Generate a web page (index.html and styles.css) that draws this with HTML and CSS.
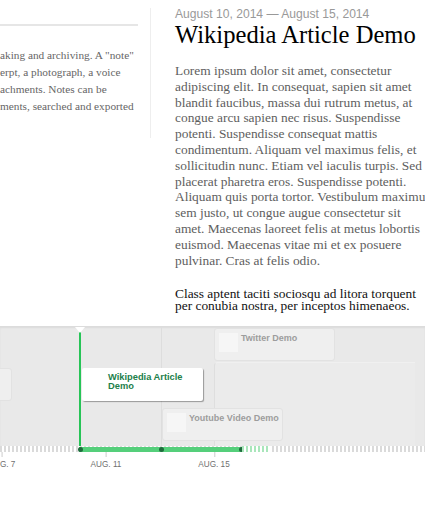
FILE: index.html
```html
<!DOCTYPE html>
<html lang="en">
<head>
<meta charset="utf-8">
<title>Timeline</title>
<link rel="stylesheet" href="styles.css">
</head>
<body>
<div class="timeline">
  <div class="slider">
    <article class="slide slide-prev">
      <div class="prev-rule"></div>
      <p class="prev-text">aking and archiving. A "note"<br>erpt, a photograph, a voice<br>achments. Notes can be<br>ments, searched and exported</p>
    </article>
    <div class="divider"></div>
    <article class="slide slide-current">
      <div class="date">August 10, 2014 — August 15, 2014</div>
      <h1 class="title">Wikipedia Article Demo</h1>
      <p class="body">Lorem ipsum dolor sit amet, consectetur<br>adipiscing elit. In consequat, sapien sit amet<br>blandit faucibus, massa dui rutrum metus, at<br>congue arcu sapien nec risus. Suspendisse<br>potenti. Suspendisse consequat mattis<br>condimentum. Aliquam vel maximus felis, et<br>sollicitudin nunc. Etiam vel iaculis turpis. Sed<br>placerat pharetra eros. Suspendisse potenti.<br>Aliquam quis porta tortor. Vestibulum maximus<br>sem justo, ut congue augue consectetur sit<br>amet. Maecenas laoreet felis at metus lobortis<br>euismod. Maecenas vitae mi et ex posuere<br>pulvinar. Cras at felis odio.</p>
      <p class="body body-dark">Class aptent taciti sociosqu ad litora torquent<br>per conubia nostra, per inceptos himenaeos.</p>
    </article>
  </div>

  <div class="nav">
    <div class="stage">
      <div class="pointer"></div>

      <div class="marker marker-left">
        <div class="flag flag-plain"></div>
      </div>

      <div class="marker marker-twitter">
        <div class="span-box"></div>
        <div class="flag">
          <span class="thumb"></span>
          <span class="flag-text">Twitter Demo</span>
        </div>
      </div>

      <div class="marker marker-youtube">
        <div class="flag">
          <span class="thumb"></span>
          <span class="flag-text">Youtube Video Demo</span>
        </div>
      </div>

      <div class="marker marker-active">
        <div class="active-line"></div>
        <div class="flag flag-active">
          <span class="thumb thumb-active"></span>
          <span class="flag-text">Wikipedia Article<br>Demo</span>
        </div>
      </div>
    </div>

    <div class="ticks">
      <div class="range">
        <span class="dot dot-start"></span>
        <span class="dot dot-mid"></span>
        <span class="dot dot-end"></span>
      </div>
      <div class="range-fade"></div>
    </div>

    <div class="labels">
      <span class="label label-7">AUG. 7</span>
      <span class="label label-11">AUG. 11</span>
      <span class="label label-15">AUG. 15</span>
    </div>
  </div>
</div>
</body>
</html>
```

FILE: styles.css
```css
html, body {
  margin: 0;
  padding: 0;
  background: #ffffff;
  overflow: hidden;
}

.timeline {
  width: 425px;
  height: 510px;
  overflow: hidden;
}

/* ---------- slider ---------- */
.slider {
  height: 326px;
  display: flex;
  align-items: flex-start;
  overflow: hidden;
}

.slide-prev {
  flex: none;
  width: 150px;
  padding-top: 24px;
}

.prev-rule {
  width: 138px;
  height: 2px;
  background: #e6e6e6;
}

.prev-text {
  margin: 21px 0 0;
  font-family: "Liberation Serif", serif;
  font-size: 11.3px;
  line-height: 17px;
  color: #666666;
  white-space: nowrap;
}

.divider {
  flex: none;
  width: 1px;
  height: 130px;
  margin-top: 8px;
  background: #eeeeee;
}

.slide-current {
  flex: none;
  width: 320px;
  height: 316px;
  padding-left: 24px;
  overflow: hidden;
  white-space: nowrap;
}

.date {
  margin-top: 7px;
  font-family: "Liberation Sans", Arial, sans-serif;
  font-size: 12.1px;
  line-height: 14px;
  color: #999999;
}

.title {
  margin: 0;
  font-family: "Liberation Serif", serif;
  font-weight: normal;
  font-size: 24.6px;
  line-height: 28px;
  color: #000000;
}

.body {
  margin: 14px 0 0;
  font-family: "Liberation Serif", serif;
  font-size: 13.4px;
  line-height: 15.8px;
  color: #5e5e5e;
}

.body-dark {
  margin-top: 20px;
  font-size: 13.4px;
  line-height: 12px;
  color: #111111;
}

/* ---------- nav ---------- */
.nav {
  position: relative;
}

.stage {
  position: relative;
  height: 120px;
  background: #e9e9e9;
  border-top: 1px solid #dcdcdc;
  box-sizing: border-box;
  box-shadow: inset 0 1px 2px rgba(0,0,0,0.06);
}

.pointer {
  position: absolute;
  left: 75px;
  top: 0;
  width: 0;
  height: 0;
  border-left: 5px solid transparent;
  border-right: 5px solid transparent;
  border-top: 6px solid #ffffff;
  z-index: 5;
}

.marker {
  position: absolute;
  top: 0;
  bottom: 0;
}

.flag {
  position: absolute;
  left: 0;
  width: 121px;
  height: 33px;
  box-sizing: border-box;
  padding: 4px;
  display: flex;
  align-items: flex-start;
  gap: 3px;
  background: #efefef;
  border: 1px solid #e2e2e2;
  border-radius: 3px;
}

.thumb {
  flex: none;
  width: 19px;
  height: 19px;
  background: #f6f6f6;
}

.flag-text {
  font-family: "Liberation Sans", Arial, sans-serif;
  font-weight: bold;
  font-size: 9px;
  line-height: 9px;
  color: #9d9d9d;
  white-space: nowrap;
  padding-top: 1px;
}

.marker-left {
  left: -110px;
  width: 122px;
}
.marker-left .flag {
  top: 41px;
  width: 122px;
}

.marker-twitter {
  left: 214px;
  width: 122px;
  z-index: 1;
}
.marker-twitter .flag {
  top: 1px;
  left: 0;
}

.span-box {
  position: absolute;
  left: 0;
  top: 35px;
  bottom: 0;
  width: 200px;
  border-left: 1px solid #dedede;
  border-top: 1px solid #f0f0f0;
  border-top-left-radius: 4px;
  background: #ebebeb;
}

.marker-youtube {
  left: 161px;
  width: 122px;
  border-left: 1px solid #dddddd;
  z-index: 2;
}
.marker-youtube .flag {
  top: 81px;
  left: 0;
}

.marker-active {
  left: 79px;
  width: 124px;
  z-index: 3;
}

.active-line {
  position: absolute;
  left: 0;
  top: 0;
  bottom: 0;
  width: 2px;
  background: #27c457;
}

.flag-active {
  top: 41px;
  left: 3px;
  width: 121px;
  background: #ffffff;
  border: none;
  border-radius: 2px;
  box-shadow: 1px 1px 1px rgba(0,0,0,0.35);
}

.thumb-active {
  background: #ffffff;
}

.flag-active .flag-text {
  color: #22804a;
  font-size: 9.3px;
}

/* ---------- ticks ---------- */
.ticks {
  position: relative;
  height: 6px;
  background: repeating-linear-gradient(90deg, #dadada 0 2px, #ffffff 2px 4px);
}

.range {
  position: absolute;
  left: 79px;
  top: 1px;
  width: 163px;
  height: 5px;
  background: #55cf7b;
}

.dot {
  position: absolute;
  top: 0;
  width: 5px;
  height: 5px;
  border-radius: 50%;
  background: #1f6b3c;
}
.dot-start { left: -1px; }
.dot-mid { left: 80px; }
.dot-end { left: 160px; }

.range-fade {
  position: absolute;
  left: 242px;
  top: 0;
  width: 28px;
  height: 6px;
  background: repeating-linear-gradient(90deg, #a9e6bb 0 2px, #ffffff 2px 4px);
}

/* ---------- labels ---------- */
.labels {
  position: relative;
  height: 20px;
}

.label {
  position: absolute;
  top: 8px;
  transform: translateX(-50%);
  font-family: "Liberation Sans", Arial, sans-serif;
  font-size: 8.2px;
  line-height: 10px;
  color: #6f6f6f;
  white-space: nowrap;
}

.label::before {
  content: "";
  position: absolute;
  left: 50%;
  top: -8px;
  width: 1px;
  height: 5px;
  background: #cccccc;
}

.label-7 { left: 2px; }
.label-11 { left: 106px; }
.label-15 { left: 214px; }
```
